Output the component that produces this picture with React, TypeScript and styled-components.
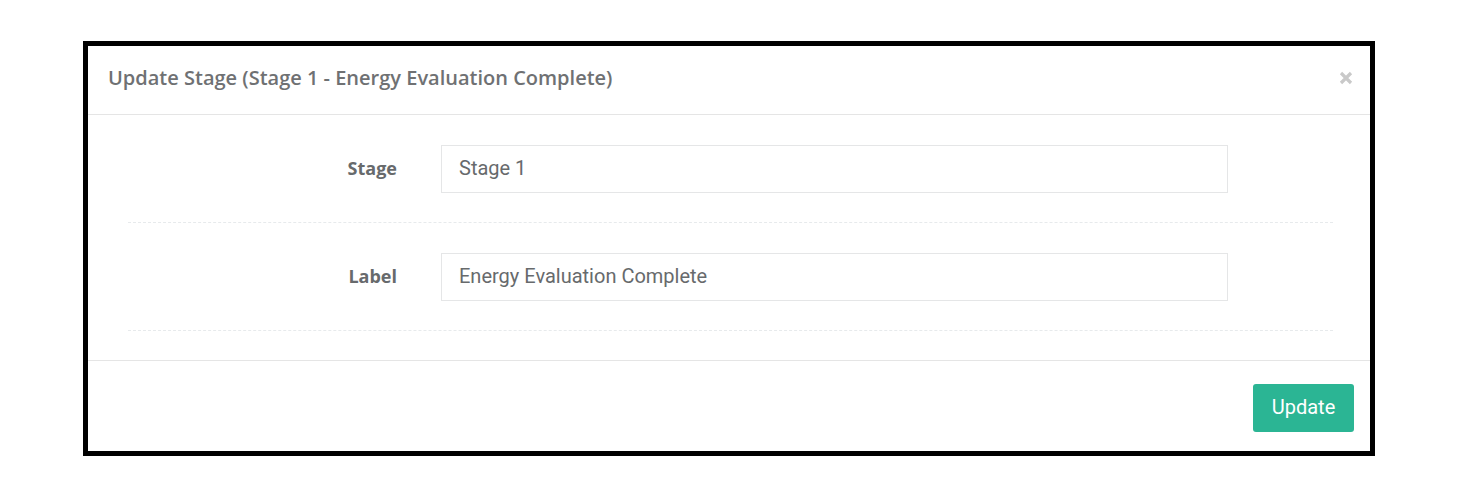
import styled, { createGlobalStyle } from "styled-components";

const GlobalStyle = createGlobalStyle`
  html, body {
    margin: 0;
    padding: 0;
    background: #ffffff;
  }
  body {
    font-family: "Open Sans", "Liberation Sans", sans-serif;
    color: #676a6c;
  }
  * {
    box-sizing: border-box;
  }
`;

const Page = styled.div`
  width: 1459px;
  height: 495px;
  padding: 41px 0 0 83px;
`;

const Modal = styled.div`
  width: 1292px;
  height: 415px;
  border: 5px solid #000;
  background: #fff;
  display: flex;
  flex-direction: column;
`;

const Header = styled.div`
  height: 69px;
  padding: 0 17px 5px 20px;
  border-bottom: 1px solid #e5e5e5;
  display: flex;
  align-items: center;
  justify-content: space-between;
`;

const Title = styled.h4`
  margin: 0;
  font-size: 20px;
  font-weight: 600;
  color: #6f7173;
`;

const Close = styled.button`
  border: 0;
  background: none;
  padding: 0;
  width: 14px;
  height: 14px;
  margin-top: 1px;
  display: flex;
  cursor: pointer;
`;

const Body = styled.div`
  padding: 0 37px 0 40px;
`;

const FormRow = styled.div`
  display: grid;
  grid-template-columns: 269px 787px;
  column-gap: 44px;
  align-items: center;
  padding: 30px 0 29px;
  border-bottom: 1px dashed #e7eaec;
`;

const Label = styled.label`
  text-align: right;
  font-size: 18px;
  font-weight: 700;
  color: #676a6c;
  margin-top: -2px;
`;

const Input = styled.input`
  height: 48px;
  width: 100%;
  border: 1px solid #e5e6e7;
  padding: 0 17px 2px;
  font-family: Roboto, "Liberation Sans", sans-serif;
  font-size: 20px;
  color: #676a6c;
  outline: none;
  background: #fff;
`;

const Footer = styled.div`
  margin-top: 29px;
  border-top: 1px solid #e5e5e5;
  padding: 23px 16px 0 0;
  display: flex;
  justify-content: flex-end;
`;

const Button = styled.button`
  height: 48px;
  width: 101px;
  border: 0;
  border-radius: 3px;
  background: #2bb594;
  color: #fff;
  font-family: Roboto, "Liberation Sans", sans-serif;
  font-size: 20px;
  padding: 0 0 2px;
  cursor: pointer;
`;

export default function App() {
  return (
    <>
      <GlobalStyle />
      <Page>
        <Modal>
          <Header>
            <Title>Update Stage (Stage 1 - Energy Evaluation Complete)</Title>
            <Close aria-label="Close">
              <svg width="14" height="14" viewBox="0 0 14 14">
                <path d="M2 2L12 12M12 2L2 12" stroke="#c9c9c9" strokeWidth="3.2" />
              </svg>
            </Close>
          </Header>
          <Body>
            <FormRow>
              <Label>Stage</Label>
              <Input defaultValue="Stage 1" />
            </FormRow>
            <FormRow>
              <Label>Label</Label>
              <Input defaultValue="Energy Evaluation Complete" />
            </FormRow>
          </Body>
          <Footer>
            <Button>Update</Button>
          </Footer>
        </Modal>
      </Page>
    </>
  );
}
